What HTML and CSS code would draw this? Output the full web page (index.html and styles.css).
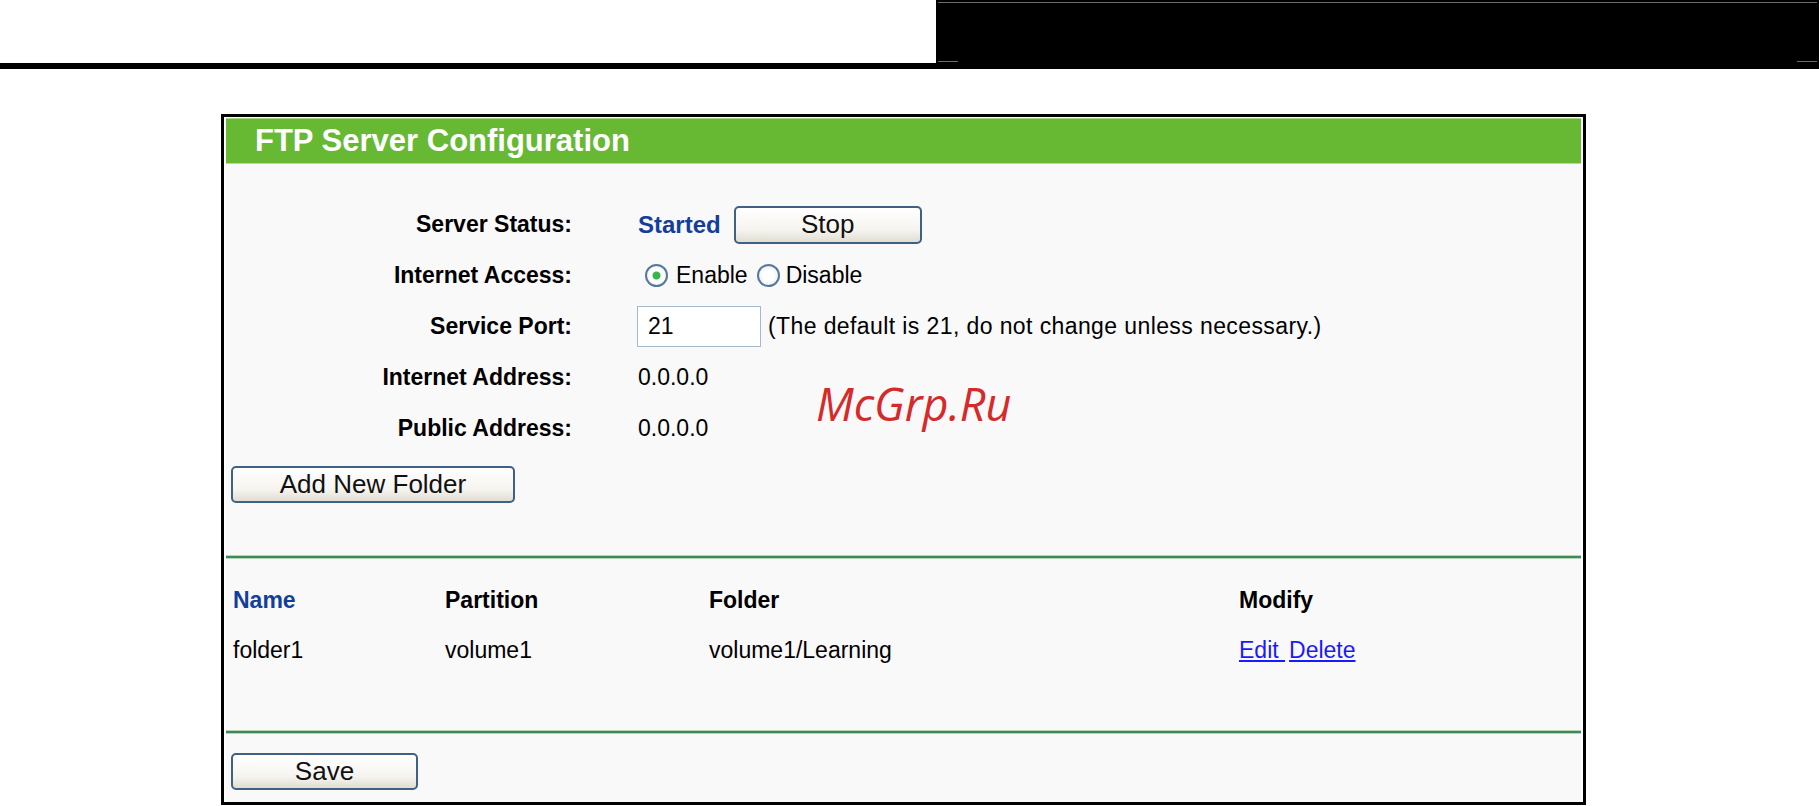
FILE: index.html
```html
<!DOCTYPE html>
<html lang="en">
<head>
  <meta charset="UTF-8" />
  <title>FTP Server Configuration</title>
  <link rel="stylesheet" href="styles.css">
</head>
<body>
  <div class="topbar">
    <div class="topbar-blank"></div>
    <div class="topbar-dark">
      <div class="topbar-line"></div>
      <div class="topbar-marks"><span></span><span></span></div>
    </div>
  </div>
  <div class="rule"></div>

  <div class="panel">
    <div class="panel-title">FTP Server Configuration</div>
    <div class="panel-body">
      <div class="form">
        <div class="label">Server Status:</div>
        <div class="value">
          <span class="status">Started</span>
          <button class="btn btn-stop">Stop</button>
        </div>

        <div class="label">Internet Access:</div>
        <div class="value">
          <label class="radio"><input type="radio" name="access" checked> Enable</label>
          <label class="radio"><input type="radio" name="access"> Disable</label>
        </div>

        <div class="label">Service Port:</div>
        <div class="value">
          <input class="port" type="text" value="21">
          <span class="hint">(The default is 21, do not change unless necessary.)</span>
        </div>

        <div class="label">Internet Address:</div>
        <div class="value">0.0.0.0</div>

        <div class="label">Public Address:</div>
        <div class="value">0.0.0.0</div>
      </div>

      <button class="btn btn-add">Add New Folder</button>

      <div class="sep sep-top"></div>

      <table class="folders">
        <tr>
          <th class="col-name">Name</th>
          <th class="col-part">Partition</th>
          <th class="col-folder">Folder</th>
          <th>Modify</th>
        </tr>
        <tr>
          <td>folder1</td>
          <td>volume1</td>
          <td>volume1/Learning</td>
          <td><a href="#">Edit&nbsp;</a><a class="link-delete" href="#">Delete</a></td>
        </tr>
      </table>

      <div class="sep sep-bottom"></div>

      <button class="btn btn-save">Save</button>
    </div>
    <div class="watermark">McGrp.Ru</div>
  </div>
</body>
</html>
```

FILE: styles.css
```css
body {
  margin: 0;
  font-family: "Liberation Sans", Arial, sans-serif;
  background: #fff;
  color: #000;
}

/* page header strip */
.topbar {
  display: flex;
  height: 63px;
}

.topbar-blank {
  width: 936px;
}

.topbar-dark {
  flex: 1;
  background: #000;
  display: flex;
  flex-direction: column;
  justify-content: space-between;
  padding: 2px 2px 1px 2px;
}

.topbar-line {
  height: 1px;
  background: #6a6a6a;
}

.topbar-marks {
  display: flex;
  justify-content: space-between;
}

.topbar-marks span {
  width: 20px;
  height: 1px;
  background: #6a6a6a;
}

.rule {
  height: 6px;
  background: #000;
}

/* config panel */
.panel {
  position: relative;
  width: 1355px;
  margin: 45px 0 0 221px;
  border: 3px solid #000;
  padding: 1px 2px 0;
  background: #fff;
}

.panel-title {
  height: 44px;
  line-height: 44px;
  padding-left: 29px;
  background: #67b934;
  border-top: 1px solid #a6d884;
  border-bottom: 1px solid #b2dd95;
  color: #fff;
  font-size: 31px;
  font-weight: bold;
}

.panel-body {
  background: #f9f9f9;
  padding-top: 35px;
  padding-bottom: 12px;
}

.form {
  display: grid;
  grid-template-columns: 346px auto;
  grid-auto-rows: 51px;
  column-gap: 66px;
  align-items: center;
  font-size: 23px;
}

.label {
  text-align: right;
  font-weight: bold;
}

.value {
  display: flex;
  align-items: center;
}

.status {
  color: #143e9b;
  font-weight: bold;
  font-size: 24px;
  margin-right: 13px;
}

.btn {
  font-family: inherit;
  font-size: 26px;
  height: 37px;
  padding: 0;
  border: 2px solid #3f6184;
  border-radius: 5px;
  background: linear-gradient(#ffffff, #f5f4ef 65%, #e1ddd2);
  color: #111;
}

.btn-stop {
  width: 188px;
  height: 38px;
}

.btn-add {
  display: block;
  width: 284px;
  margin: 12px 0 0 5px;
}

.btn-save {
  display: block;
  width: 187px;
  margin: 19px 0 0 5px;
}

.radio {
  display: flex;
  align-items: center;
  margin-right: 9px;
}

.radio input {
  appearance: none;
  width: 23px;
  height: 23px;
  margin: 0 8px 0 7px;
  border: 2px solid #54799b;
  border-radius: 50%;
  background: radial-gradient(circle, #ffffff 40%, #dfe4e8);
  box-sizing: border-box;
}

.radio input:checked {
  background: radial-gradient(circle, #35b54a 0 3.5px, #ffffff 4.5px 50%, #dfe4e8);
}

.radio + .radio input {
  margin-left: 0;
  margin-right: 6px;
}

.port {
  box-sizing: border-box;
  width: 124px;
  height: 41px;
  margin: 0 7px 0 -1px;
  padding: 0 10px;
  border: 1px solid #a5b9cc;
  background: #fff;
  font-family: inherit;
  font-size: 23px;
}

.hint {
  letter-spacing: 0.4px;
}

.sep {
  height: 2px;
  background: #3d8a55;
  border-top: 1px solid #b3d5ba;
  border-bottom: 1px solid #b3d5ba;
}

.sep-top {
  margin-top: 52px;
}

.sep-bottom {
  margin-top: 55px;
}

.folders {
  border-collapse: collapse;
  margin: 16px 0 0 7px;
  font-size: 23px;
}

.folders th,
.folders td {
  height: 50px;
  padding: 0;
  text-align: left;
  vertical-align: middle;
}

.folders th {
  font-weight: bold;
}

.col-name {
  width: 212px;
  color: #143e9b;
}

.col-part {
  width: 264px;
}

.col-folder {
  width: 530px;
}

.folders a {
  color: #1a1aff;
}

.link-delete {
  margin-left: 4px;
}

.watermark {
  position: absolute;
  left: 592px;
  top: 264px;
  font-family: "Open Sans", sans-serif;
  font-style: italic;
  font-size: 45px;
  line-height: 1;
  color: #d62a2a;
}
```
